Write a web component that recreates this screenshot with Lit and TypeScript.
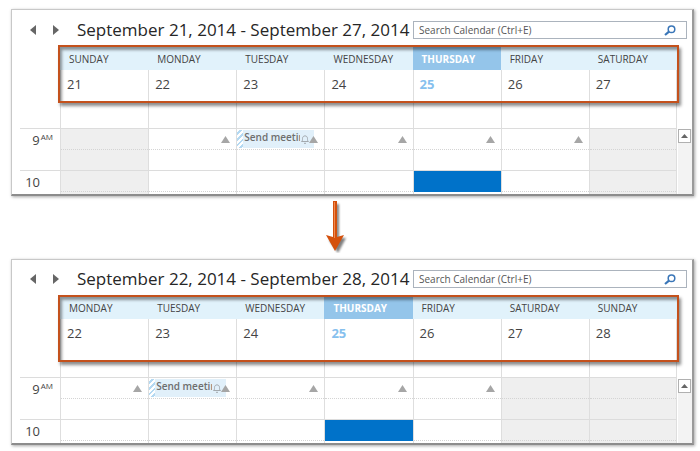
import { LitElement, html, css, svg, nothing } from "lit";
import { customElement, property } from "lit/decorators.js";
import { classMap } from "lit/directives/class-map.js";

interface Day {
  name: string;
  date: number;
  today?: boolean;
  off?: boolean;
  event?: string;
  more?: boolean;
}

const sunday = (date: number): Day => ({ name: "SUNDAY", date, off: true });

const workdays: Day[] = [
  { name: "MONDAY", date: 22, more: true },
  { name: "TUESDAY", date: 23, more: true, event: "Send meetin" },
  { name: "WEDNESDAY", date: 24, more: true },
  { name: "THURSDAY", date: 25, more: true, today: true },
  { name: "FRIDAY", date: 26, more: true },
  { name: "SATURDAY", date: 27, off: true },
];

const upTriangle = svg`<path d="M4.5 0 L9 7 H0 Z" fill="#a6a6a6"/>`;

@customElement("week-view")
export class WeekView extends LitElement {
  @property() range = "";
  @property({ attribute: false }) days: Day[] = [];

  static styles = css`
    :host {
      display: block;
      font-family: "Open Sans", "Noto Sans", sans-serif;
      color: #444;
      background: #fff;
      border: 1px solid #c8c8c8;
      border-right: 2px solid #9a9a9a;
      border-bottom: 2px solid #8c8c8c;
      box-shadow: 1px 1px 3px rgba(0, 0, 0, 0.35);
      box-sizing: border-box;
    }
    * {
      box-sizing: border-box;
    }
    button {
      border: 0;
      padding: 0;
      margin: 0;
      background: none;
      display: flex;
      align-items: center;
      justify-content: center;
    }
    svg {
      display: block;
      flex: none;
    }
    .toolbar {
      display: flex;
      align-items: center;
      height: 36px;
      padding: 4px 5px 0 16px;
    }
    :host([tall]) .toolbar {
      padding-top: 2px;
    }
    .nav {
      width: 10px;
      height: 14px;
      margin-right: 13px;
    }
    h1 {
      flex: none;
      width: 336px;
      margin: 0 0 0 3px;
      font-size: 17px;
      line-height: 24px;
      font-weight: 400;
      color: #262626;
      white-space: nowrap;
    }
    .search {
      flex: 1;
      display: flex;
      align-items: center;
      height: 18px;
      border: 1px solid #abb3bd;
      min-width: 0;
    }
    .search input {
      flex: 1;
      min-width: 0;
      height: 16px;
      border: 0;
      outline: 0;
      padding: 0 5px;
      background: none;
      font: 10px/16px "Open Sans", "Noto Sans", sans-serif;
      color: #555;
    }
    .search input::placeholder {
      color: #555;
      opacity: 1;
    }
    .search button {
      width: 22px;
      margin-right: 5px;
    }
    .body {
      display: flex;
      padding-left: 8px;
    }
    .week {
      position: relative;
      flex: 1;
      min-width: 0;
    }
    .frame {
      position: absolute;
      left: 38px;
      right: -2px;
      top: -1px;
      height: 58px;
      border: 2px solid #c4511c;
      box-shadow: 2px 3px 3px rgba(0, 0, 0, 0.45), inset 2px 3px 3px rgba(0, 0, 0, 0.4);
      pointer-events: none;
    }
    :host([tall]) .frame {
      height: 67px;
    }
    table {
      width: 100%;
      table-layout: fixed;
      border-collapse: separate;
      border-spacing: 0;
    }
    th,
    td {
      padding: 0;
      vertical-align: top;
      text-align: left;
      font-weight: 400;
    }
    .gutter {
      width: 40px;
    }
    .name {
      height: 24px;
      padding: 2px 0 0 9px;
      font-size: 10px;
      line-height: 22px;
      background: #e1f2fb;
      vertical-align: middle;
    }
    :host([tall]) .name {
      height: 23px;
      padding-top: 1px;
    }
    .name.today {
      background: #94c5ea;
      color: #fff;
      font-weight: 700;
    }
    .date {
      height: 58px;
      padding: 3px 0 0 6px;
      border-left: 1px solid #dedede;
      font-size: 13px;
      line-height: 22px;
    }
    .date.today {
      color: #86c0ee;
      font-weight: 700;
    }
    .slot,
    .hour {
      border-top: 1px solid #dcdcdc;
    }
    .slot {
      height: 42px;
      border-left: 1px solid #dedede;
    }
    .date:last-child,
    .slot:last-child {
      border-right: 1px solid #dedede;
    }
    .slot.last,
    .hour.last {
      height: 24px;
    }
    .slot.off {
      background: #efefef;
    }
    .half {
      display: flex;
      height: 21px;
      justify-content: flex-end;
      border-bottom: 1px dotted #d4d4d4;
    }
    .half.picked {
      background: #0072c9;
      border-color: #0072c9;
    }
    .hour {
      font-size: 13px;
      line-height: 22px;
      padding-right: 20px;
      text-align: right;
    }
    .hour.first {
      padding-right: 7px;
    }
    sup {
      font-size: 8px;
      line-height: 8px;
      vertical-align: 5px;
      margin-left: 1px;
    }
    .more {
      width: 9px;
      height: 7px;
      margin: 7px 6px 0 -5px;
      z-index: 1;
    }
    .event {
      flex: 1;
      min-width: 0;
      display: flex;
      height: 18px;
      margin-top: 1px;
      padding-right: 5px;
      background: #e1f0fa;
      font-size: 10px;
      line-height: 14px;
      font-weight: 600;
      color: #6e6e6e;
    }
    .stripe {
      flex: none;
      width: 6px;
      margin-right: 1px;
      background: repeating-linear-gradient(135deg, #fff 0 2px, #b4d9f2 2px 4px);
    }
    .title {
      flex: 1;
      min-width: 0;
      overflow: hidden;
      white-space: nowrap;
    }
    .bell {
      margin: 5px 0 0 1px;
    }
    .scroll {
      flex: none;
      width: 14px;
      margin: 83px 0 0 1px;
      padding-right: 1px;
      background: #f3f3f3;
    }
    .scroll button {
      width: 13px;
      height: 14px;
      background: #fff;
      border: 1px solid #b0b0b0;
    }
  `;

  private renderFirst(day: Day) {
    return html`<td class=${classMap({ slot: true, off: !!day.off })}>
      <div class="half">
        ${day.event
          ? html`<div class="event">
              <span class="stripe"></span><span class="title">${day.event}</span>
              <svg class="bell" width="8" height="9" viewBox="0 0 8 9" fill="none" stroke="#a3a9ae">
                <path d="M0.5 6.5 C1.5 6 1.5 5 1.5 3.5 C1.5 0 6.5 0 6.5 3.5 C6.5 5 6.5 6 7.5 6.5 Z M3 8.3 H5" />
              </svg>
            </div>`
          : nothing}
        ${day.more
          ? html`<button class="more" aria-label="More items on ${day.name}">
              <svg width="9" height="7" viewBox="0 0 9 7">${upTriangle}</svg>
            </button>`
          : nothing}
      </div>
    </td>`;
  }

  render() {
    return html`
      <div class="toolbar">
        <button class="nav" aria-label="Previous week">
          <svg width="6" height="10" viewBox="0 0 6 10"><path d="M6 0 V10 L0 5 Z" fill="#666" /></svg>
        </button>
        <button class="nav" aria-label="Next week">
          <svg width="6" height="10" viewBox="0 0 6 10"><path d="M0 0 V10 L6 5 Z" fill="#666" /></svg>
        </button>
        <h1>${this.range}</h1>
        <div class="search">
          <input type="text" aria-label="Search Calendar" placeholder="Search Calendar (Ctrl+E)" />
          <button aria-label="Search">
            <svg width="12" height="11" viewBox="0 0 12 11" fill="none" stroke="#3a76b8">
              <circle cx="7.5" cy="4.2" r="3.3" stroke-width="1.5" />
              <path d="M5 6.7 L1 10" stroke-width="2.2" />
            </svg>
          </button>
        </div>
      </div>
      <div class="body">
        <div class="week">
          <table>
            <thead>
              <tr>
                <td class="gutter"></td>
                ${this.days.map(
                  (d) => html`<th scope="col" class=${classMap({ name: true, today: !!d.today })}>${d.name}</th>`
                )}
              </tr>
              <tr>
                <td></td>
                ${this.days.map((d) => html`<td class=${classMap({ date: true, today: !!d.today })}>${d.date}</td>`)}
              </tr>
            </thead>
            <tbody>
              <tr>
                <th scope="row" class="hour first">9<sup>AM</sup></th>
                ${this.days.map((d) => this.renderFirst(d))}
              </tr>
              <tr>
                <th scope="row" class="hour last">10</th>
                ${this.days.map(
                  (d) => html`<td class=${classMap({ slot: true, last: true, off: !!d.off })}>
                    <div class=${classMap({ half: true, picked: !!d.today })}></div>
                  </td>`
                )}
              </tr>
            </tbody>
          </table>
          <div class="frame"></div>
        </div>
        <div class="scroll">
          <button aria-label="Scroll up">
            <svg width="7" height="4" viewBox="0 0 7 4"><path d="M3.5 0 L7 4 H0 Z" fill="#666" /></svg>
          </button>
        </div>
      </div>
    `;
  }
}

@customElement("app-root")
export class AppRoot extends LitElement {
  static styles = css`
    :host {
      display: block;
      padding: 9px 6px 6px 11px;
      background: #fff;
    }
    .then {
      display: flex;
      justify-content: center;
      padding: 5px 36px 6px 0;
    }
  `;

  render() {
    return html`
      <week-view range="September 21, 2014 - September 27, 2014" .days=${[sunday(21), ...workdays]}></week-view>
      <div class="then">
        <svg width="28" height="52" viewBox="0 0 28 52">
          <defs>
            <filter id="soft" x="-50%" y="-20%" width="200%" height="140%">
              <feGaussianBlur stdDeviation="1.2" />
            </filter>
          </defs>
          <path d="M15 3 H18 V37 L25 37 L17 52 L8 39 L15 37 Z" fill="#000" opacity="0.5" filter="url(#soft)" />
          <path d="M12 0 H16 V36 L23 34 L14 50 L5 34 L12 36 Z" fill="#d4500c" />
          <path d="M13.5 1 V37" stroke="#f08a50" />
        </svg>
      </div>
      <week-view tall range="September 22, 2014 - September 28, 2014" .days=${[...workdays, sunday(28)]}></week-view>
    `;
  }
}
